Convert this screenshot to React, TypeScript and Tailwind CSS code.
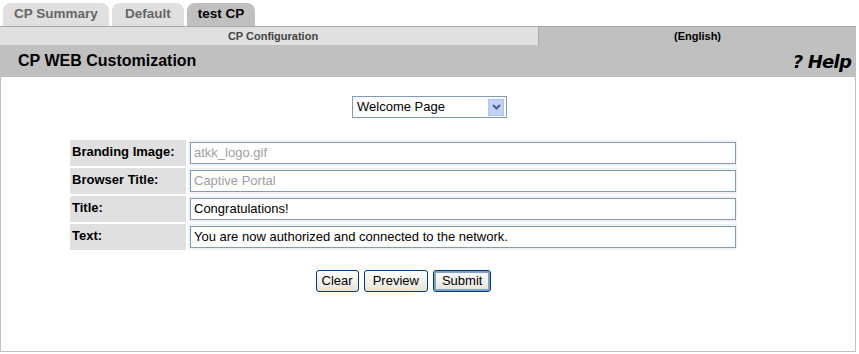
import React from "react";

const tabs = [
  { label: "CP Summary", active: false, w: "w-[106px]" },
  { label: "Default", active: false, w: "w-[72px]" },
  { label: "test CP", active: true, w: "w-[68px]" },
];

const fields = [
  { label: "Branding Image:", value: "atkk_logo.gif", muted: true },
  { label: "Browser Title:", value: "Captive Portal", muted: true },
  { label: "Title:", value: "Congratulations!", muted: false },
  { label: "Text:", value: "You are now authorized and connected to the network.", muted: false },
];

const App = () => {
  return (
    <div className="w-[859px] h-[354px] bg-white font-['Liberation_Sans',Arial,sans-serif] text-[13px] text-black">
      <div className="w-[856px]">
        {/* Tabs */}
        <div className="flex items-end gap-[3px] pl-[3px] pt-[3px] h-[27px] border-b border-[#a8a8a8]">
          {tabs.map((t) => (
            <div
              key={t.label}
              className={`${t.w} h-[23px] rounded-t-[8px] flex items-center justify-center font-bold text-[13.5px] ${
                t.active ? "bg-[#c0c0c0] text-black" : "bg-[#e0e0e0] text-[#666666]"
              }`}
            >
              {t.label}
            </div>
          ))}
        </div>

        {/* Sub bar */}
        <div className="flex h-[18px] text-[11px] font-bold">
          <div className="w-[539px] bg-[#e0e0e0] text-[#444444] flex items-center justify-center pl-[8px] border-r border-[#a8a8a8]">
            CP Configuration
          </div>
          <div className="flex-1 bg-[#c0c0c0] flex items-center justify-center">
            (English)
          </div>
        </div>

        {/* Header */}
        <div className="h-[32px] bg-[#c0c0c0] flex items-center justify-between pl-[18px] pr-[5px]">
          <span className="font-bold text-[16px]">CP WEB Customization</span>
          <span className="font-['DejaVu_Sans',Verdana,sans-serif] font-bold italic text-[18px] tracking-[-0.8px]">
            ? Help
          </span>
        </div>

        {/* Content */}
        <div className="h-[275px] border-l border-r border-b border-[#c0c0c0] bg-white">
          <div className="flex justify-center pt-[19px] pl-[3px]">
            <div className="w-[155px] h-[22px] border border-[#7f9db9] flex items-center justify-between pl-[4px] pr-[2px] bg-white">
              <span>Welcome Page</span>
              <div className="w-[16px] h-[17px] bg-[#c1d3fb] border border-[#b0c4f0] flex items-center justify-center">
                <svg width="9" height="6" viewBox="0 0 9 6">
                  <path d="M1 1 L4.5 4.5 L8 1" stroke="#4d6185" strokeWidth="2" fill="none" />
                </svg>
              </div>
            </div>
          </div>

          <div className="ml-[69px] mt-[22px] w-[667px]">
            <div className="flex flex-col gap-[2px]">
              {fields.map((f) => (
                <div key={f.label} className="flex gap-[2px] h-[26px]">
                  <div className="w-[116px] bg-[#e0e0e0] font-bold pl-[2px] pt-[2px]">{f.label}</div>
                  <div className="flex-1 bg-[#f0f2f5] flex items-center pl-[2px] pr-[1px]">
                    <div
                      className={`w-full h-[22px] border border-[#7f9db9] bg-white flex items-center px-[3px] ${
                        f.muted ? "text-[#a0a0a0]" : "text-black"
                      }`}
                    >
                      {f.value}
                    </div>
                  </div>
                </div>
              ))}
            </div>

            <div className="flex justify-center gap-[5px] mt-[20px]">
              <button className="h-[22px] px-[5px] rounded-[3px] border border-[#003c74] bg-gradient-to-b from-white to-[#e6e3d6]">
                Clear
              </button>
              <button className="h-[22px] px-[8px] rounded-[3px] border border-[#003c74] bg-gradient-to-b from-white to-[#e6e3d6]">
                Preview
              </button>
              <button className="h-[22px] px-[8px] rounded-[3px] border border-[#003c74] bg-gradient-to-b from-white to-[#e6e3d6] shadow-[inset_0_0_0_2px_#7da2ce]">
                Submit
              </button>
            </div>
          </div>
        </div>
      </div>
    </div>
  );
};

export default App;
